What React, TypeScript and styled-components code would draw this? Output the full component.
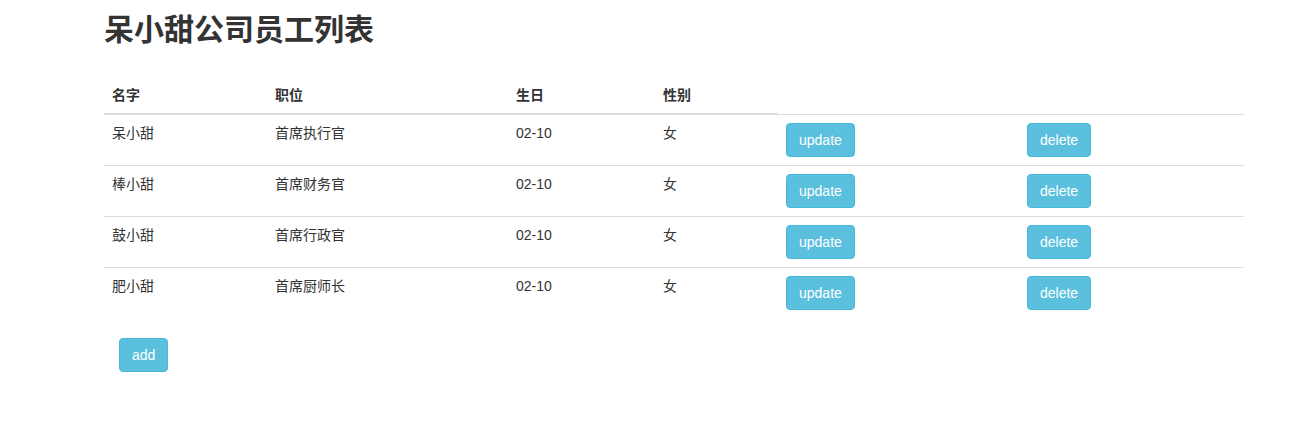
import { FunctionComponent } from 'react'
import styled, { createGlobalStyle } from 'styled-components'

type Employee = {
  id: number
  name: string
  title: string
  birthday: string
  gender: string
}

const employees: Employee[] = [
  { id: 1, name: '呆小甜', title: '首席执行官', birthday: '02-10', gender: '女' },
  { id: 2, name: '棒小甜', title: '首席财务官', birthday: '02-10', gender: '女' },
  { id: 3, name: '鼓小甜', title: '首席行政官', birthday: '02-10', gender: '女' },
  { id: 4, name: '肥小甜', title: '首席厨师长', birthday: '02-10', gender: '女' },
]

const colWidths = [163, 241, 147, 123, 241, 225]

const App: FunctionComponent = () => {
  return (
    <>
      <GlobalStyle />
      <Page>
        <Title>呆小甜公司员工列表</Title>
        <Table>
          <colgroup>
            {colWidths.map((w, i) => (
              <Col key={i} $width={w} />
            ))}
          </colgroup>
          <thead>
            <tr>
              <Th>名字</Th>
              <Th>职位</Th>
              <Th>生日</Th>
              <Th>性别</Th>
            </tr>
          </thead>
          <tbody>
            {employees.map(emp => (
              <tr key={emp.id}>
                <Td>{emp.name}</Td>
                <Td>{emp.title}</Td>
                <Td>{emp.birthday}</Td>
                <Td>{emp.gender}</Td>
                <Td>
                  <InfoButton>update</InfoButton>
                </Td>
                <Td>
                  <InfoButton>delete</InfoButton>
                </Td>
              </tr>
            ))}
          </tbody>
        </Table>
        <Actions>
          <InfoButton>add</InfoButton>
        </Actions>
      </Page>
    </>
  )
}

export default App

const GlobalStyle = createGlobalStyle`
  * {
    box-sizing: border-box;
  }
  body {
    margin: 0;
    background: #fff;
    color: #333;
    font-family: "Liberation Sans", "Noto Sans CJK SC", sans-serif;
    font-size: 14px;
    line-height: 1.42857143;
  }
`

const Page = styled.div`
  width: 1140px;
  margin-left: 104px;
  padding-top: 13px;
`

const Title = styled.h2`
  margin: 0 0 31px;
  font-size: 30px;
  font-weight: 700;
  line-height: 1.1;
  color: #333;
`

const Table = styled.table`
  width: 100%;
  table-layout: fixed;
  border-collapse: collapse;
  border-spacing: 0;
  margin-bottom: 20px;
`

const Col = styled.col<{ $width: number }>`
  width: ${props => props.$width}px;
`

const Th = styled.th`
  padding: 8px;
  text-align: left;
  vertical-align: bottom;
  font-weight: 700;
  line-height: 20px;
  border-bottom: 2px solid #ddd;
`

const Td = styled.td`
  padding: 8px;
  vertical-align: top;
  line-height: 20px;
  border-top: 1px solid #ddd;
`

const InfoButton = styled.button`
  display: inline-block;
  padding: 6px 12px;
  font-family: inherit;
  font-size: 14px;
  line-height: 20px;
  color: #fff;
  background-color: #5bc0de;
  border: 1px solid #46b8da;
  border-radius: 4px;
  cursor: pointer;

  &:hover {
    background-color: #31b0d5;
    border-color: #269abc;
  }
`

const Actions = styled.div`
  padding-left: 15px;
`
